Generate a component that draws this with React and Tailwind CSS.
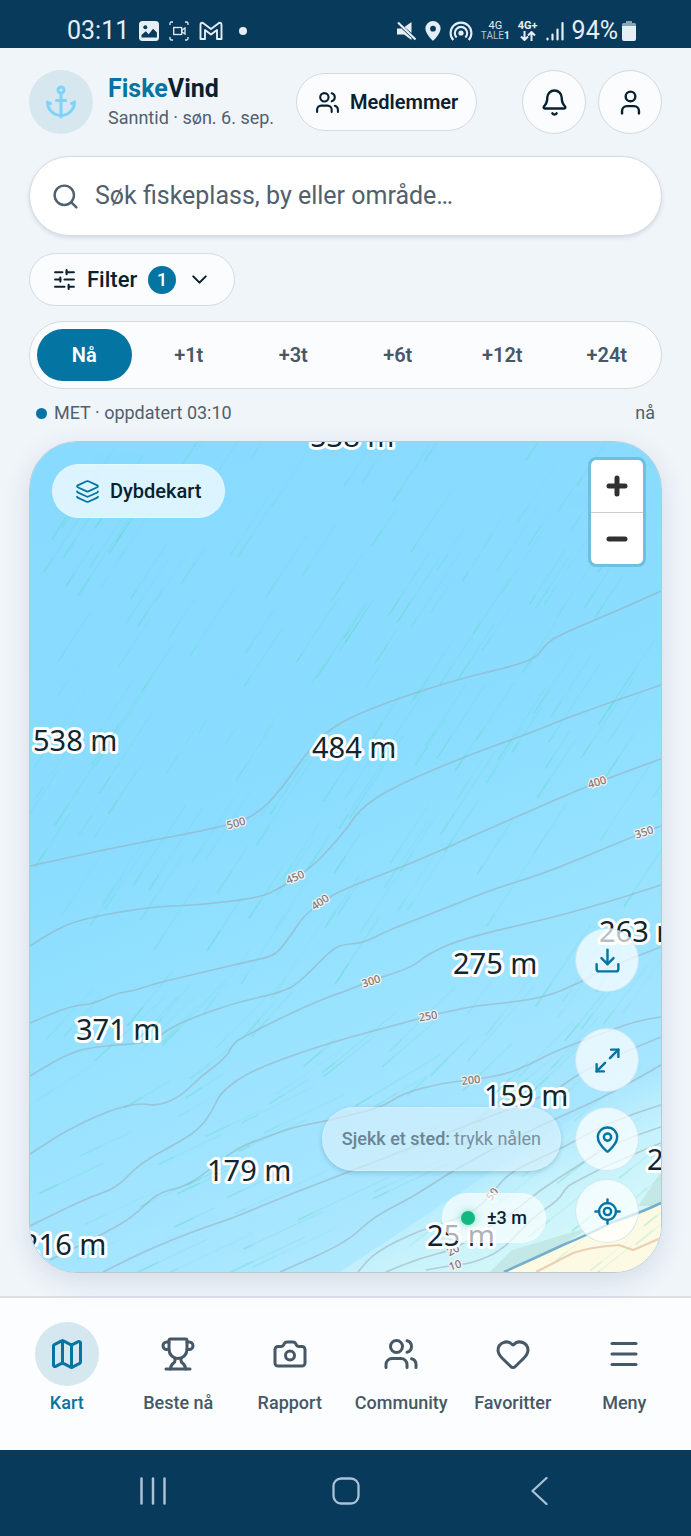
import {
  Anchor, Bell, Camera, ChevronDown, Download, Heart, Layers, LocateFixed, Map as MapIcon,
  MapPin, Maximize2, Menu, Search, SlidersHorizontal, Trophy, User, Users,
} from 'lucide-react';

const hours = ['Nå', '+1t', '+3t', '+6t', '+12t', '+24t'];

const navItems = [
  { label: 'Kart', Icon: MapIcon, active: true },
  { label: 'Beste nå', Icon: Trophy },
  { label: 'Rapport', Icon: Camera },
  { label: 'Community', Icon: Users },
  { label: 'Favoritter', Icon: Heart },
  { label: 'Meny', Icon: Menu },
];

// Depth contours, each a list of x,y points.
const contours = [
  [661,591, 626,607, 559,635, 546,644, 536,658, 513,666, 459,679, 396,699, 346,719, 320,737, 300,762, 283,787, 260,812, 233,825, 117,847, 30,866],
  [661,685, 579,713, 533,732, 463,757, 389,789, 359,810, 346,830, 313,867, 277,890, 257,898, 200,905, 147,907, 77,920, 50,933, 30,946],
  [661,759, 597,782, 546,804, 479,833, 413,863, 346,888, 321,902, 303,917, 293,932, 280,950, 270,957, 250,961, 200,973, 157,983, 133,991, 117,993, 93,1004, 70,1006, 30,1023],
  [661,826, 644,832, 546,873, 496,888, 423,917, 389,930, 363,943, 346,944, 333,948, 300,982, 283,992, 233,1003, 187,1020, 167,1030, 150,1043, 87,1047, 60,1058, 30,1076],
  [661,885, 586,910, 463,938, 426,955, 413,967, 370,981, 346,991, 320,1000, 283,1017, 247,1035, 233,1043, 227,1057, 200,1077, 180,1097, 157,1106, 140,1103, 110,1110, 67,1130, 30,1154],
  [661,947, 613,965, 579,983, 546,997, 506,1003, 473,1006, 428,1016, 396,1025, 346,1038, 293,1055, 247,1073, 220,1093, 213,1110, 200,1128, 183,1140, 140,1163, 117,1188, 87,1198, 30,1226],
  [661,1017, 639,1020, 606,1032, 553,1052, 529,1065, 503,1075, 471,1080, 443,1083, 403,1093, 383,1107, 327,1121, 293,1127, 250,1143, 230,1153, 200,1177, 183,1187, 157,1193, 133,1217, 103,1234, 50,1260],
  [661,1037, 629,1050, 579,1073, 553,1093, 480,1120, 400,1152, 346,1173, 283,1197, 233,1218, 197,1230, 147,1250, 103,1272],
  [661,1065, 613,1093, 553,1120, 500,1145, 449,1173, 413,1197, 373,1217, 346,1243, 280,1272],
  [661,1105, 613,1120, 563,1148, 509,1172, 492,1194, 470,1215, 420,1230, 375,1252, 358,1272],
  [661,1127, 613,1143, 576,1167, 540,1190, 510,1215, 479,1233, 453,1250, 420,1258, 386,1272],
  [661,1143, 610,1164, 579,1180, 566,1187, 559,1200, 533,1217, 503,1250, 473,1263, 455,1265, 426,1270],
];

const depths = [
  [33, 751, '538 m'], [310, 447, '538 m'], [312, 758, '484 m'], [76, 1040, '371 m'],
  [207, 1181, '179 m'], [22, 1255, '216 m'], [453, 974, '275 m'], [599, 942, '263 m'],
  [484, 1106, '159 m'], [647, 1170, '25 m'], [427, 1246, '25 m'],
];

const contourLabels = [
  [236, 823, -14, '500'], [295, 877, -24, '450'], [320, 902, -34, '400'], [597, 782, -16, '400'],
  [644, 832, -18, '350'], [371, 981, -18, '300'], [428, 1016, -10, '250'], [471, 1080, -7, '200'],
  [492, 1194, -50, '50'], [453, 1250, -30, '20'], [455, 1265, -18, '10'],
];

function smooth(p) {
  let d = `M${p[0]} ${p[1]}`;
  for (let i = 2; i < p.length - 2; i += 2) {
    d += ` Q${p[i]} ${p[i + 1]} ${(p[i] + p[i + 2]) / 2} ${(p[i + 1] + p[i + 3]) / 2}`;
  }
  return `${d} L${p[p.length - 2]} ${p[p.length - 1]}`;
}

// Wind streaks run towards the south-west and flatten out in the lower left.
function makeStreaks() {
  let seed = 11;
  const rnd = () => {
    seed = (seed * 16807) % 2147483647;
    return seed / 2147483647;
  };
  const list = [];
  for (let i = 0; i < 260; i++) {
    const x = 25 + rnd() * 630;
    const y = 450 + rnd() * 830;
    const low = Math.min(1, Math.max(0, (y - 1000) / 130));
    const angle = 0.99 - low * (x < 400 ? 0.55 : 0.32);
    const tail = 40 + rnd() * 60;
    const head = 8 + rnd() * 18;
    const dx = Math.cos(angle);
    const dy = Math.sin(angle);
    list.push({ x, y, hx: x + dx * head, hy: y - dy * head, tx: x + dx * tail, ty: y - dy * tail, o: 0.15 + rnd() * 0.3 });
  }
  return list;
}
const streaks = makeStreaks();

function DepthChart() {
  return (
    <svg className="absolute inset-0 h-full w-full" viewBox="30 442 631 830" preserveAspectRatio="xMidYMid slice" role="img" aria-label="Dybdekart">
      <defs>
        <linearGradient id="sea" x1="0.35" y1="0" x2="0.65" y2="1">
          <stop offset="0" stopColor="#88dbff" />
          <stop offset="0.4" stopColor="#8addff" />
          <stop offset="0.62" stopColor="#96e2ff" />
          <stop offset="0.85" stopColor="#a5e5ff" />
          <stop offset="1" stopColor="#b2ebfe" />
        </linearGradient>
        <linearGradient id="shallow" gradientUnits="userSpaceOnUse" x1="520" y1="1130" x2="575" y2="1245">
          <stop offset="0" stopColor="#c6f2fc" stopOpacity="0" />
          <stop offset="0.5" stopColor="#c6f2fc" />
          <stop offset="1" stopColor="#d4f8f8" />
        </linearGradient>
      </defs>
      <rect x="30" y="442" width="631" height="830" fill="url(#sea)" />
      <path d="M661 1060 L340 1272 H661Z" fill="url(#shallow)" />
      <path d="M661 1172 L638 1206 L661 1206ZM490 1272 L512 1250 L590 1227 L563 1245 L506 1272Z" fill="#bfe3e0" opacity=".75" />
      <path d="M661 1203 Q640 1213 613 1222 Q585 1236 563 1245 Q535 1258 504 1272 H661Z" fill="#fdfae4" />
      <path d="M661 1203 Q640 1213 613 1222 Q585 1236 563 1245 Q535 1258 504 1272" fill="none" stroke="#74aecb" strokeWidth="2.5" />
      <path d="M661 1238 L633 1250 L619 1245 Q590 1247 573 1253 L536 1272" fill="none" stroke="#ecd0b4" strokeWidth="2.2" />
      {contours.map((p, i) => (
        <path key={i} d={smooth(p)} fill="none" stroke="#9aa5b2" strokeOpacity=".5" strokeWidth="1.6" />
      ))}
      <g className="font-['Noto_Sans',sans-serif] text-[11px] font-medium" fill="#857474" stroke="#f0f3f5" strokeWidth="2.5" strokeLinejoin="round" paintOrder="stroke" textAnchor="middle">
        {contourLabels.map(([x, y, r, t]) => (
          <text key={`${x}-${y}`} x={x} y={y + 4} transform={`rotate(${r} ${x} ${y})`}>{t}</text>
        ))}
      </g>
      <g className="font-['Noto_Sans',sans-serif] text-[29px]" fill="#10262f" stroke="#ffffff" strokeWidth="6" strokeLinejoin="round" paintOrder="stroke">
        {depths.map(([x, y, t]) => (
          <text key={`${x}-${y}`} x={x} y={y}>{t}</text>
        ))}
      </g>
      <g stroke="#5cd8bd" strokeLinecap="round" fill="none">
        {streaks.map((s, i) => (
          <g key={i} opacity={s.o}>
            <path d={`M${s.x} ${s.y}L${s.tx} ${s.ty}`} strokeWidth="1.2" opacity=".45" />
            <path d={`M${s.x} ${s.y}L${s.hx} ${s.hy}`} strokeWidth="1.7" opacity=".8" />
          </g>
        ))}
      </g>
    </svg>
  );
}

function StatusBar() {
  return (
    <div className="flex h-12 items-end justify-between bg-[#083a5b] pr-[55px] pb-[5px] pl-[67px] text-[#e6eef5]">
      <div className="flex items-center gap-[10px]">
        <span className="text-[25px] leading-6">03:11</span>
        <svg className="size-5" viewBox="0 0 20 20" aria-hidden="true">
          <rect width="20" height="20" rx="3.5" fill="currentColor" />
          <circle cx="6.3" cy="6.3" r="2" fill="#083a5b" />
          <path d="M2.5 16.5v-2.6l4.2-3.7 3 3 4.4-5.5 3.8 3.8v5z" fill="#083a5b" />
        </svg>
        <svg className="size-5" viewBox="0 0 20 20" fill="none" stroke="currentColor" strokeWidth="1.3" aria-hidden="true">
          <path d="M1 4V2.500Q1 1 2.500 1H4M16 1h1.500Q19 1 19 2.500V4M19 16v1.500Q19 19 17.500 19H16M4 19H2.500Q1 19 1 17.500V16" />
          <rect x="4.700" y="6.500" width="8" height="7" />
          <path d="M12.700 9.300 16 7v6l-3.300-2.300z" />
        </svg>
        <svg className="h-5 w-6" viewBox="0 0 24 20" fill="none" stroke="currentColor" strokeWidth="1.900" strokeLinejoin="round" aria-hidden="true">
          <path d="M1.500 4Q1.500 1 4 2L12 8l8-6Q22.500 1 22.500 4V18H18V9L12 13.500 6 9v9H1.500z" />
        </svg>
        <span className="ml-[6px] size-2 rounded-full bg-[#e6eef5]" />
      </div>
      <div className="flex items-center gap-2">
        <svg className="size-5" viewBox="0 0 20 20" fill="currentColor" aria-hidden="true">
          <path d="M0 7.500h4.500L14.500 17v2L7 13.500H0zM7.500 6 14.500 1v11z" />
          <path d="M1 1.500 18.500 18.500" stroke="currentColor" strokeWidth="2.200" />
        </svg>
        <svg className="h-5 w-4" viewBox="0 0 16 20" aria-hidden="true">
          <path fill="currentColor" fillRule="evenodd" d="M8 0a7.600 7.600 0 0 1 7.600 7.600C15.600 13 8 20 8 20S.4 13 .4 7.600A7.600 7.600 0 0 1 8 0zm0 4.800a2.900 2.900 0 1 0 0 5.800 2.900 2.900 0 0 0 0-5.800z" />
        </svg>
        <svg className="h-5 w-6" viewBox="0 0 24 20" fill="none" stroke="currentColor" strokeWidth="2.100" aria-hidden="true">
          <path d="M4.300 19A10.400 10.400 0 1 1 19.700 19M7.600 16.400a6.200 6.200 0 1 1 8.800 0" />
          <circle cx="12" cy="12" r="2.600" fill="currentColor" stroke="none" />
        </svg>
        <span className="flex flex-col items-center text-[10px] leading-[10px]">
          <span className="text-[11px]">4G</span>
          <span className="text-[#b4c6d4]">TALE<b className="text-[#e6eef5]">1</b></span>
        </span>
        <span className="flex flex-col items-center text-[11px] leading-[10px] font-bold">
          <span>4G+</span>
          <svg className="h-[10px] w-4" viewBox="0 0 16 10" fill="none" stroke="currentColor" strokeWidth="2" aria-hidden="true">
            <path d="M4.500 0v8.500M1 5.500l3.500 3.500L8 5.500M11.500 10V1.500M8 4.500 11.500 1 15 4.500" />
          </svg>
        </span>
        <svg className="h-5 w-[18px]" viewBox="0 0 18 20" stroke="currentColor" strokeWidth="2.200" strokeLinecap="round" aria-hidden="true">
          <path d="M1.500 17.500v1M6.500 13.500v5M11.500 8.500v10M16.500 2v16.500" />
        </svg>
        <span className="flex items-center gap-1">
          <span className="text-[25px] leading-6">94%</span>
          <svg className="h-5 w-[14px]" viewBox="0 0 14 20" aria-hidden="true">
            <path d="M4 0h6v2h2.500Q14 2 14 3.500V6H0V3.500Q0 2 1.500 2H4z" fill="#8aa3b5" />
            <path d="M0 5h14v13q0 2-2 2H2q-2 0-2-2z" fill="currentColor" />
          </svg>
        </span>
      </div>
    </div>
  );
}

const roundButton = 'grid size-16 place-items-center rounded-full border border-[#d3dae1] bg-[#fafcfe]';
const mapButton = 'grid size-16 place-items-center rounded-full border border-[#b9dceb]/60 bg-white/70 text-[#0474a2]';

export default function App() {
  return (
    <div className="flex min-h-screen flex-col bg-[#f0f5fa] font-[Roboto,sans-serif] text-[#08202f]">
      <StatusBar />

      <main className="flex flex-1 flex-col px-[29px] pt-[22px] pb-[23px]">
        <header className="flex items-center">
          <span className="grid size-16 shrink-0 place-items-center rounded-full bg-[#d7e7ef] text-[#7dd3fc]">
            <Anchor size={36} />
          </span>
          <div className="ml-[15px] whitespace-nowrap">
            <h1 className="text-[25px] leading-[31px] font-bold"><span className="text-[#0474a2]">Fiske</span>Vind</h1>
            <p className="text-lg leading-7 text-[#50606d]">Sanntid · søn. 6. sep.</p>
          </div>
          <button type="button" className="ml-[22px] flex h-[58px] items-center gap-[10px] rounded-full border border-[#d3dae1] bg-[#fafcfe] px-[18px] text-xl font-semibold">
            <Users size={25} />
            Medlemmer
          </button>
          <div className="ml-auto flex gap-3">
            <button type="button" aria-label="Varsler" className={roundButton}><Bell size={29} /></button>
            <button type="button" aria-label="Profil" className={roundButton}><User size={29} /></button>
          </div>
        </header>

        <label className="mt-[22px] flex h-20 items-center gap-[15px] rounded-full border border-[#d3dae1] bg-white px-[21px] text-[#50606d] shadow-[0_2px_4px_rgba(10,40,70,0.12)]">
          <Search size={29} className="shrink-0" />
          <input type="text" aria-label="Søk" placeholder="Søk fiskeplass, by eller område…" className="min-w-0 flex-1 bg-transparent text-[25px] outline-none placeholder:text-[#50606d]" />
        </label>

        <button type="button" className="mt-[17px] flex h-[53px] items-center self-start rounded-full border border-[#d3dae1] bg-[#fafcfe] px-[22px] text-[22px] font-medium">
          <SlidersHorizontal size={25} />
          <span className="ml-[10px]">Filter</span>
          <span className="ml-[11px] grid size-7 place-items-center rounded-full bg-[#0474a2] text-lg text-white">1</span>
          <ChevronDown size={25} className="ml-[11px]" />
        </button>

        <div className="mt-[15px] grid h-[68px] grid-cols-6 gap-[10px] rounded-full border border-[#d3dae1] bg-[#fafcfe] p-[7px] text-xl font-semibold">
          {hours.map((hour, i) => (
            <button key={hour} type="button" className={i === 0 ? 'rounded-full bg-[#0474a2] text-white' : 'rounded-full text-[#465866]'}>{hour}</button>
          ))}
        </div>

        <div className="mt-[9px] flex h-[30px] items-center px-[7px] text-lg text-[#50606d]">
          <span className="mr-[7px] size-[11px] rounded-full bg-[#0474a2]" />
          <span>MET · oppdatert 03:10</span>
          <span className="ml-auto">nå</span>
        </div>

        <section className="relative mt-[13px] min-h-[600px] flex-1 overflow-hidden rounded-[48px] border border-[#b9c9d4] shadow-[0_8px_28px_rgba(10,40,70,0.12)]">
          <DepthChart />

          <button type="button" className="absolute top-[22px] left-[22px] flex h-[54px] items-center gap-[10px] rounded-full border border-white/30 bg-white/70 px-[22px] text-xl font-medium">
            <Layers size={25} strokeWidth={1.75} className="text-[#0474a2]" />
            Dybdekart
          </button>

          <div className="absolute top-[15px] right-[15px] overflow-hidden rounded-lg border-3 border-[#70bfdf] bg-white bg-clip-padding text-[#303030]">
            <button type="button" aria-label="Zoom inn" className="grid h-[53px] w-[52px] place-items-center border-b border-[#cccccc]">
              <svg className="size-6" viewBox="0 0 24 24" stroke="currentColor" strokeWidth="5" strokeLinecap="round" aria-hidden="true"><path d="M4 12h16M12 4v16" /></svg>
            </button>
            <button type="button" aria-label="Zoom ut" className="grid h-[51px] w-[52px] place-items-center">
              <svg className="size-6" viewBox="0 0 24 24" stroke="currentColor" strokeWidth="5" strokeLinecap="round" aria-hidden="true"><path d="M4 12h16" /></svg>
            </button>
          </div>

          <div className="absolute right-[22px] bottom-[29px] flex flex-col items-end">
            <button type="button" aria-label="Last ned kart" className={mapButton}><Download size={29} /></button>
            <button type="button" aria-label="Fullskjerm" className={`mt-9 ${mapButton}`}><Maximize2 size={29} /></button>
            <div className="mt-[15px] flex items-center gap-[14px]">
              <p className="flex h-16 items-center gap-1 rounded-full border border-white/20 bg-[#def1fc]/60 px-[19px] text-lg whitespace-nowrap text-[#7a919f] shadow-[0_2px_5px_rgba(10,60,90,0.2)]">
                <span className="font-medium text-[#6a8494]">Sjekk et sted:</span>
                <span>trykk nålen</span>
              </p>
              <button type="button" aria-label="Sjekk et sted" className={mapButton}><MapPin size={29} /></button>
            </div>
            <div className="mt-2 flex items-center gap-[29px]">
              <p className="mt-[14px] flex h-[50px] items-center gap-3 rounded-full border border-white/40 bg-white/65 px-[18px] text-lg font-medium whitespace-nowrap">
                <span className="size-[14px] rounded-full bg-[#10b981] shadow-[0_0_8px_#10b98180]" />
                ±3 m
              </p>
              <button type="button" aria-label="Min posisjon" className={mapButton}><LocateFixed size={29} /></button>
            </div>
          </div>
        </section>
      </main>

      <nav className="grid h-[154px] grid-cols-6 border-t-2 border-[#dae0e6] bg-[#fcfdff] px-[11px] pt-6">
        {navItems.map(({ label, Icon, active }) => (
          <a key={label} href="#" className={`flex flex-col items-center gap-[5px] text-lg leading-6 font-medium whitespace-nowrap ${active ? 'text-[#0474a2]' : 'text-[#465866]'}`}>
            <span className={`grid size-16 place-items-center rounded-full ${active ? 'bg-[#d5e7ef]' : ''}`}><Icon size={36} /></span>
            {label}
          </a>
        ))}
      </nav>

      <div className="grid h-[86px] grid-cols-3 items-center bg-[#083a5b] px-14 pb-1 text-[#a9c2d6]">
        <button type="button" aria-label="Nylige apper" className="grid place-items-center">
          <svg className="size-7" viewBox="0 0 28 28" stroke="currentColor" strokeWidth="2.500" strokeLinecap="round" aria-hidden="true"><path d="M2.500 1.500v25M14 1.500v25M25.500 1.500v25" /></svg>
        </button>
        <button type="button" aria-label="Hjem" className="grid place-items-center">
          <svg className="size-7" viewBox="0 0 28 28" fill="none" stroke="currentColor" strokeWidth="2.300" aria-hidden="true"><rect x="1.500" y="1.500" width="25" height="25" rx="7.500" /></svg>
        </button>
        <button type="button" aria-label="Tilbake" className="grid place-items-center">
          <svg className="size-7" viewBox="0 0 28 28" fill="none" stroke="currentColor" strokeWidth="2.300" strokeLinecap="round" strokeLinejoin="round" aria-hidden="true"><path d="M21.500 1 7.500 14l14 13" /></svg>
        </button>
      </div>
    </div>
  );
}
